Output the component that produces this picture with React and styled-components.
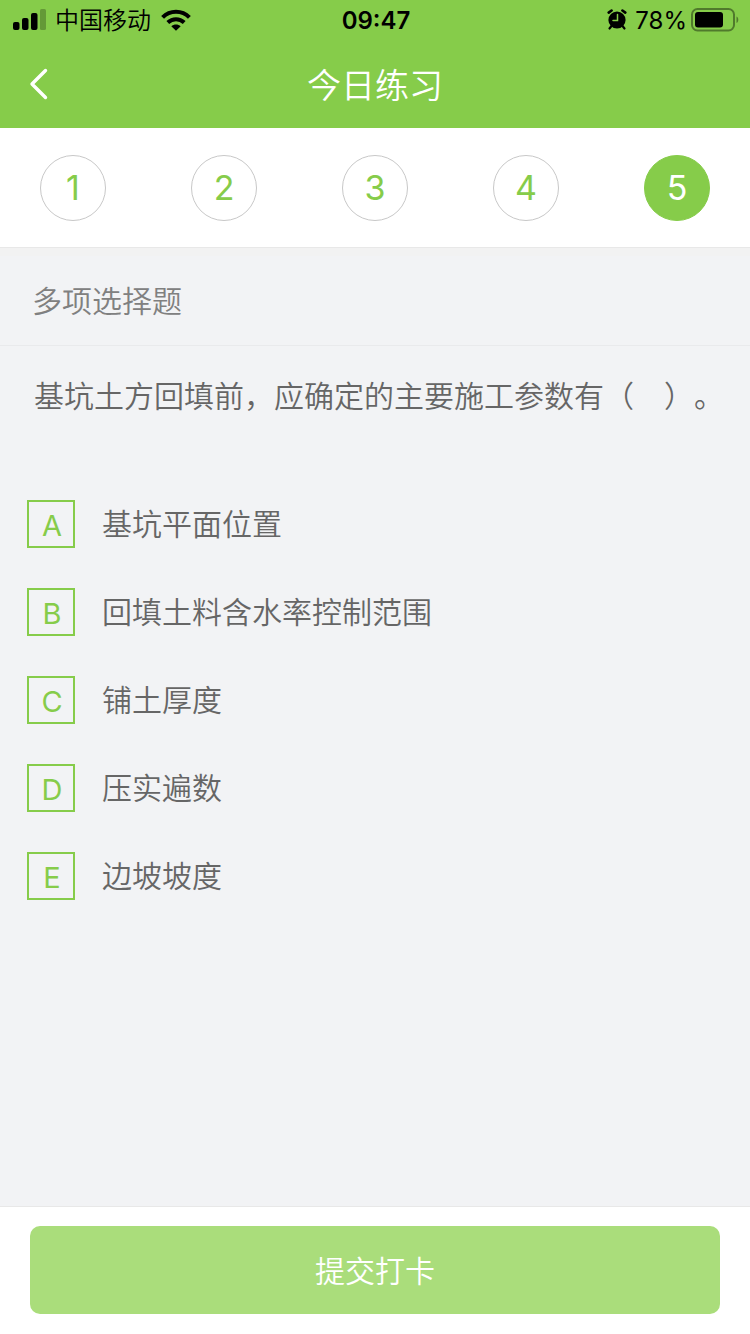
import React, { useState } from 'react';
import styled, { createGlobalStyle, css } from 'styled-components';

const STEPS = [1, 2, 3, 4, 5];

const OPTIONS = [
  { key: 'A', text: '基坑平面位置' },
  { key: 'B', text: '回填土料含水率控制范围' },
  { key: 'C', text: '铺土厚度' },
  { key: 'D', text: '压实遍数' },
  { key: 'E', text: '边坡坡度' },
];

function StatusBar() {
  return (
    <StatusTag>
      <StatusLeft>
        <svg width="33" height="22" viewBox="0 0 33 22" aria-hidden="true">
          <rect x="0" y="13" width="6.500" height="8" rx="2" />
          <rect x="9" y="9" width="6.500" height="12" rx="2" />
          <rect x="18" y="4" width="6.500" height="17" rx="2" />
          <rect x="27" y="0" width="6" height="21" rx="1.600" opacity="0.25" />
        </svg>
        <Carrier>中国移动</Carrier>
        <svg width="30" height="22" viewBox="0 0 30 22" aria-hidden="true">
          <g fill="none" stroke="#000" strokeWidth="4">
            <path d="M1.600 8.400C9 .8 21 .8 28.400 8.400" />
            <path d="M6.800 13.500c4.700-4.500 11.700-4.500 16.400 0" />
          </g>
          <path d="M15 21.800l-4.700-4.600c2.600-2.400 6.800-2.400 9.400 0z" />
        </svg>
      </StatusLeft>
      <Time>09:47</Time>
      <StatusRight>
        <svg width="20" height="22" viewBox="0 0 20 22" aria-hidden="true">
          <circle cx="10" cy="11" r="8.600" />
          <g fill="none" stroke="#000" strokeLinecap="round">
            <path d="M1.700 3.600L4.600 1.500M18.300 3.600L15.400 1.500" strokeWidth="2.600" />
            <path d="M4.500 17l-2 2.500M15.500 17l2 2.500" strokeWidth="2.200" />
          </g>
          <path d="M10.500 5.500v6H6" fill="none" stroke="#86cc4a" strokeWidth="1.500" strokeLinecap="round" />
        </svg>
        <Percent>78%</Percent>
        <svg width="48" height="24" viewBox="0 0 48 24" aria-hidden="true">
          <rect x="1" y="1" width="42" height="21.500" rx="5.500" fill="none" stroke="#000" strokeWidth="2" opacity="0.4" />
          <rect x="4" y="4" width="28" height="15.500" rx="3" />
          <path d="M45.500 8.500c2.400 1 2.400 5.500 0 6.500z" opacity="0.4" />
        </svg>
      </StatusRight>
    </StatusTag>
  );
}

function App() {
  const [step, setStep] = useState(5);
  const [checked, setChecked] = useState([]);

  const onToggle = (key) => {
    setChecked(
      checked.includes(key) ? checked.filter((k) => k !== key) : [...checked, key]
    );
  };

  return (
    <Page>
      <GlobalStyle />
      <Header>
        <StatusBar />
        <NavBar>
          <BackButton type="button" aria-label="返回">
            <svg width="20" height="32" viewBox="0 0 20 32" aria-hidden="true">
              <path d="M17.500 2.500L4 16l13.500 13.500" fill="none" stroke="#fff" strokeWidth="3.400" strokeLinecap="round" strokeLinejoin="round" />
            </svg>
          </BackButton>
          <Title>今日练习</Title>
        </NavBar>
      </Header>

      <Steps>
        {STEPS.map((n) => (
          <StepButton key={n} type="button" $active={n === step} onClick={() => setStep(n)}>
            {n}
          </StepButton>
        ))}
      </Steps>

      <Main>
        <TypeRow>多项选择题</TypeRow>
        <Question>基坑土方回填前，应确定的主要施工参数有（　）。</Question>
        <OptionList>
          {OPTIONS.map(({ key, text }) => (
            <Option key={key}>
              <OptionBox>
                <OptionInput
                  type="checkbox"
                  checked={checked.includes(key)}
                  onChange={() => onToggle(key)}
                />
                <OptionLetter>{key}</OptionLetter>
              </OptionBox>
              {text}
            </Option>
          ))}
        </OptionList>
      </Main>

      <Footer>
        <SubmitButton type="button">提交打卡</SubmitButton>
      </Footer>
    </Page>
  );
}

export default App;

const GlobalStyle = createGlobalStyle`
  * {
    box-sizing: border-box;
  }
  body {
    margin: 0;
    background: #f2f3f5;
    font-family: Inter, "Noto Sans CJK SC", sans-serif;
    font-weight: 350;
    text-spacing-trim: space-all;
  }
  button {
    padding: 0;
    border: 0;
    font-family: inherit;
    font-weight: inherit;
    cursor: pointer;
  }
`;

const center = css`
  display: flex;
  align-items: center;
  justify-content: center;
`;

const Page = styled.div`
  display: flex;
  flex-direction: column;
  min-height: 100vh;
`;

const Header = styled.header`
  background: #86cc4a;
`;

const StatusTag = styled.div`
  display: grid;
  grid-template-columns: 1fr auto 1fr;
  align-items: center;
  height: 40px;
  padding: 0 11px 0 13px;
  font-size: 24px;
  line-height: 36px;
  color: #000;
`;

const StatusLeft = styled.div`
  display: flex;
  align-items: center;
`;

const StatusRight = styled(StatusLeft)`
  justify-content: flex-end;
`;

const StatusText = styled.span`
  padding-top: 2px;
`;

const Carrier = styled(StatusText)`
  margin: 0 10px 0 9px;
`;

const Time = styled(StatusText)`
  font-weight: 600;
`;

const Percent = styled(StatusText)`
  margin: 0 4px 0 8px;
  font-weight: 400;
`;

const NavBar = styled.div`
  display: grid;
  grid-template-columns: 80px 1fr 80px;
  align-items: center;
  height: 88px;
`;

const BackButton = styled.button`
  display: flex;
  align-items: center;
  height: 88px;
  padding-left: 28px;
  background: none;
`;

const Title = styled.h1`
  margin: 0;
  padding-top: 4px;
  font-size: 34px;
  font-weight: inherit;
  line-height: 84px;
  text-align: center;
  color: #fff;
`;

const Steps = styled.nav`
  display: flex;
  justify-content: space-between;
  align-items: center;
  height: 120px;
  padding: 0 40px;
  background: #fff;
  border-bottom: 1px solid #e8e8e8;
`;

const StepButton = styled.button`
  ${center}
  width: 66px;
  height: 66px;
  border: 1px solid ${(props) => (props.$active ? '#86cc4a' : '#c8c8c8')};
  border-radius: 50%;
  background: ${(props) => (props.$active ? '#86cc4a' : '#fff')};
  color: ${(props) => (props.$active ? '#fff' : '#86cc4a')};
  font-size: 34px;
  font-weight: 400;
`;

const Main = styled.main`
  flex: 1;
  border-top: 8px solid #f2f2f2;
`;

const TypeRow = styled.h2`
  margin: 0;
  padding: 18px 32px 17px;
  border-bottom: 1px solid #e9eaec;
  font-size: 30px;
  font-weight: inherit;
  line-height: 54px;
  color: #808080;
`;

const Question = styled.p`
  margin: 0;
  padding: 28px 10px 28px 34px;
  font-size: 30px;
  line-height: 44px;
  color: #666;
`;

const OptionList = styled.div`
  display: flex;
  flex-direction: column;
  gap: 40px;
  padding: 54px 28px 40px 27px;
`;

const Option = styled.label`
  display: flex;
  align-items: center;
  gap: 27px;
  font-size: 30px;
  line-height: 48px;
  color: #666;
  cursor: pointer;
`;

const OptionBox = styled.span`
  display: grid;
  flex: none;
  width: 48px;
  height: 48px;
`;

const OptionInput = styled.input`
  grid-area: 1 / 1;
  appearance: none;
  width: 48px;
  height: 48px;
  margin: 0;
  border: 2px solid #86cc4a;
  cursor: pointer;
  &:checked {
    background: #86cc4a;
  }
  &:checked + span {
    color: #fff;
  }
`;

const OptionLetter = styled.span`
  ${center}
  grid-area: 1 / 1;
  z-index: 1;
  padding: 2px 0 0 2px;
  color: #86cc4a;
  font-size: 29px;
  font-weight: 400;
  pointer-events: none;
`;

const Footer = styled.footer`
  padding: 19px 30px 20px;
  background: #fff;
  border-top: 1px solid #e8e8e8;
`;

const SubmitButton = styled.button`
  ${center}
  width: 100%;
  height: 88px;
  padding-bottom: 2px;
  border-radius: 10px;
  background: #aadd7b;
  color: #fff;
  font-size: 30px;
`;
